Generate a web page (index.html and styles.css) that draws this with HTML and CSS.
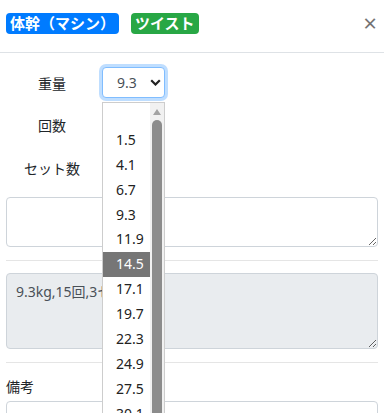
FILE: index.html
```html
<!DOCTYPE html>
<html lang="ja">
<head>
    <meta charset="UTF-8">
    <meta name="viewport" content="width=device-width, initial-scale=1.0">
    <title>記録</title>
    <link rel="stylesheet" href="styles.css">
</head>
<body>
    <div class="modal-content">
        <div class="modal-header">
            <h5 class="modal-title">
                <span class="badge badge-primary">体幹（マシン）</span>
                <span class="badge badge-success">ツイスト</span>
            </h5>
            <button type="button" class="close">&times;</button>
        </div>
        <div class="modal-body">
            <div class="field-rows">
                <div class="field-row">
                    <label class="field-label" for="weight">重量</label>
                    <select id="weight" class="field-select is-focused">
                        <option>9.3</option>
                    </select>
                </div>
                <div class="field-row">
                    <label class="field-label" for="reps">回数</label>
                    <select id="reps" class="field-select">
                        <option>15</option>
                    </select>
                </div>
                <div class="field-row">
                    <label class="field-label" for="sets">セット数</label>
                    <select id="sets" class="field-select">
                        <option>3</option>
                    </select>
                </div>
            </div>

            <textarea class="form-control memo-input"></textarea>
            <hr>
            <textarea class="form-control summary" readonly>9.3kg,15回,3セット</textarea>
            <hr>
            <label class="note-label" for="note">備考</label>
            <textarea id="note" class="form-control note-input"></textarea>

            <div class="select-popup">
                <ul class="option-list">
                    <li class="option"></li>
                    <li class="option">1.5</li>
                    <li class="option">4.1</li>
                    <li class="option">6.7</li>
                    <li class="option">9.3</li>
                    <li class="option">11.9</li>
                    <li class="option selected">14.5</li>
                    <li class="option">17.1</li>
                    <li class="option">19.7</li>
                    <li class="option">22.3</li>
                    <li class="option">24.9</li>
                    <li class="option">27.5</li>
                    <li class="option">30.1</li>
                    <li class="option">32.7</li>
                </ul>
                <div class="scrollbar">
                    <div class="scroll-arrow"></div>
                    <div class="scroll-thumb"></div>
                </div>
            </div>
        </div>
    </div>
</body>
</html>
```
FILE: styles.css
```css
body {
    margin: 0;
    font-family: "Noto Sans", "Noto Sans CJK JP", sans-serif;
    font-size: 14px;
    color: #212529;
    background-color: #fff;
}
.modal-content {
    width: 384px;
    height: 413px;
    overflow: hidden;
}
.modal-header {
    display: flex;
    align-items: flex-start;
    height: 53px;
    padding: 8px 6px 0;
    box-sizing: border-box;
    border-bottom: 1px solid #dee2e6;
}
.modal-title {
    display: flex;
    align-items: center;
    gap: 12px;
    height: 30px;
    margin: 0;
    font-size: 20px;
}
.badge {
    display: inline-block;
    padding: 3px 4px;
    font-size: 15px;
    font-weight: 700;
    line-height: 1;
    color: #fff;
    border-radius: 4px;
}
.badge-primary {
    background-color: #007bff;
}
.badge-success {
    background-color: #28a745;
}
.close {
    margin-left: auto;
    height: 30px;
    padding: 0 1px 0 0;
    border: none;
    background: transparent;
    font-family: "Noto Sans", sans-serif;
    font-size: 24px;
    font-weight: 400;
    line-height: 28px;
    color: #000;
    opacity: .55;
}
.modal-body {
    position: relative;
    padding: 14px 6px 0;
}
.field-rows {
    display: flex;
    flex-direction: column;
    gap: 11.5px;
    margin-bottom: 14px;
}
.field-row {
    display: flex;
    align-items: center;
    height: 31px;
}
.field-label {
    width: 92px;
    margin-right: 4px;
    text-align: center;
}
.field-select {
    appearance: none;
    width: 63px;
    height: 31px;
    padding: 0 0 0 14px;
    font-family: inherit;
    font-size: 14px;
    color: #495057;
    background-color: #fff;
    background-image: url("data:image/svg+xml,%3csvg xmlns='http://www.w3.org/2000/svg' width='11' height='7' viewBox='0 0 11 7'%3e%3cpath d='M1.2 1.2l4.3 4.3 4.3-4.3' fill='none' stroke='%23222' stroke-width='2.2'/%3e%3c/svg%3e");
    background-repeat: no-repeat;
    background-position: right 3px center;
    border: 1px solid #ced4da;
    border-radius: 4px;
    outline: none;
}
.field-select.is-focused {
    border-color: #80bdff;
    box-shadow: 0 0 0 3px rgba(0, 123, 255, .25);
}
.form-control {
    display: block;
    width: 100%;
    box-sizing: border-box;
    padding: 6px 9px;
    font-family: inherit;
    font-size: 14px;
    line-height: 24px;
    color: #495057;
    background-color: #fff;
    border: 1px solid #ced4da;
    border-radius: 4px;
}
.memo-input {
    height: 50px;
}
.summary {
    height: 76px;
    background-color: #e9ecef;
}
.note-input {
    height: 60px;
}
hr {
    margin: 13px 0 12px;
    border: 0;
    border-top: 1px solid rgba(0, 0, 0, .1);
}
.note-label {
    display: block;
    margin-top: 5px;
    margin-bottom: 2px;
    line-height: 24px;
}
.select-popup {
    position: absolute;
    left: 102px;
    top: 49px;
    display: flex;
    width: 63px;
    height: 330px;
    box-sizing: border-box;
    background-color: #fff;
    border: 1px solid #cdcdcd;
}
.option-list {
    flex: 1;
    margin: 0;
    padding: 0;
    list-style: none;
    overflow: hidden;
}
.option {
    height: 24.9px;
    padding-left: 13px;
    font-size: 14px;
    line-height: 24.9px;
    color: #222;
}
.option.selected {
    background-color: #767676;
    color: #fff;
}
.scrollbar {
    display: flex;
    flex-direction: column;
    align-items: center;
    width: 14px;
    background-color: #f1f1f1;
}
.scroll-arrow {
    width: 0;
    height: 0;
    margin-top: 6px;
    border-left: 4.5px solid transparent;
    border-right: 4.5px solid transparent;
    border-bottom: 6px solid #a3a3a3;
}
.scroll-thumb {
    flex: 1;
    width: 10px;
    margin-top: 5px;
    background-color: #8c8c8c;
    border-radius: 5px 5px 0 0;
}
```
